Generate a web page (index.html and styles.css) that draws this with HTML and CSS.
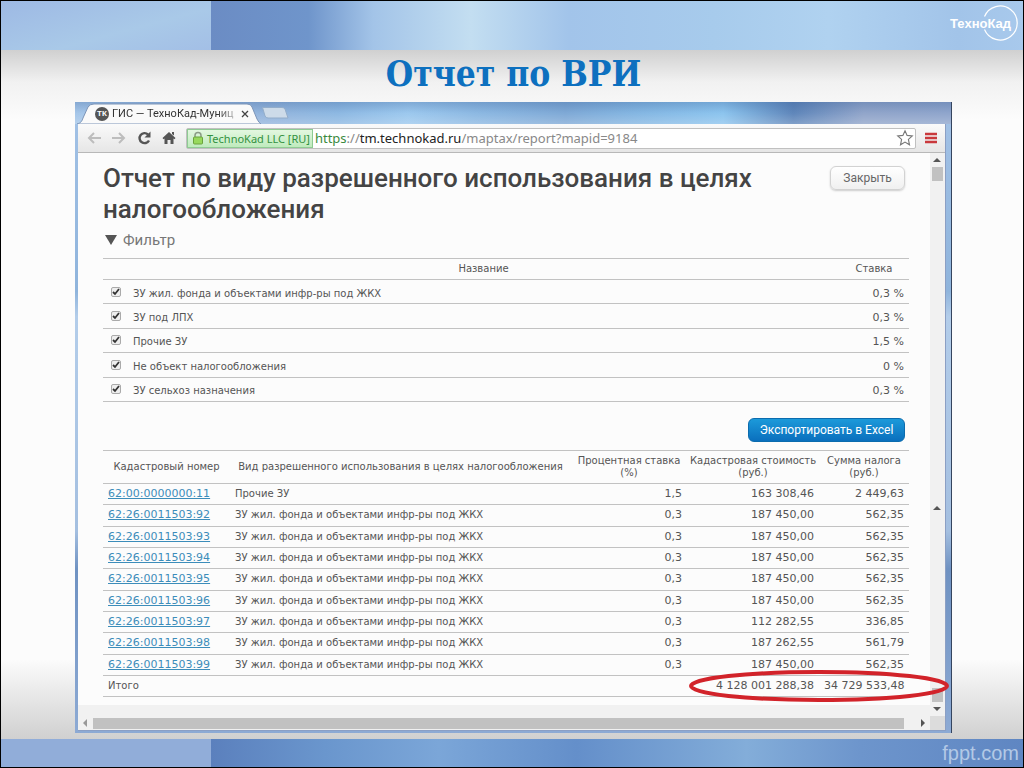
FILE: index.html
```html
<!DOCTYPE html>
<html lang="ru">
<head>
<meta charset="utf-8">
<title>Отчет по ВРИ</title>
<link rel="stylesheet" href="styles.css">
</head>
<body>
<div class="slide">
  <header class="band band-top">
    <div class="band-light"></div>
    <div class="band-sky"></div>
    <div class="brand">
      <svg class="brand-ring" viewBox="0 0 36 36" aria-hidden="true"><path d="M2.5 11.5A17 17 0 1 1 2.5 24.500" fill="none" stroke="#fff" stroke-width="1.200"/></svg>
      <span class="brand-name">ТехноКад</span>
    </div>
  </header>

  <main class="stage">
    <h1 class="slide-title">Отчет по ВРИ</h1>
    <section class="window">
      <div class="tabs">
        <div class="tab">
          <svg class="tab-shape" viewBox="0 0 184 22" preserveAspectRatio="none" aria-hidden="true"><path d="M0 22C4 21 5 19 6 16L11 5Q13 2 17 2H170Q174 2 175 5L180 17Q182 21 184 22Z" fill="#fafafa" stroke="#7d95b8"/></svg>
          <span class="tab-icon">ТК</span>
          <span class="tab-label">ГИС — ТехноКад-Муниц</span>
          <button class="tab-close" aria-label="Закрыть вкладку"><svg viewBox="0 0 8 8"><path d="M1 1L7 7M7 1L1 7" stroke="#444" stroke-width="1.300"/></svg></button>
        </div>
        <button class="tab-new" aria-label="Новая вкладка"><svg viewBox="0 0 28 14"><path d="M1.500 1.500H21Q23 1.500 24 3L27 12H7Q5 12 4 10Z" fill="#cddbe9" stroke="#93adca"/></svg></button>
      </div>

      <div class="page">
        <div class="toolbar">
          <button class="tool" aria-label="Назад"><svg viewBox="0 0 16 16"><path d="M8 3L3 8L8 13M3 8H15" fill="none" stroke="#bdbdbd" stroke-width="2"/></svg></button>
          <button class="tool" aria-label="Вперед"><svg viewBox="0 0 16 16"><path d="M8 3L13 8L8 13M13 8H1" fill="none" stroke="#bdbdbd" stroke-width="2"/></svg></button>
          <button class="tool" aria-label="Обновить"><svg viewBox="0 0 16 16"><path d="M12 4.500A5 5 0 1 0 13 10.500" fill="none" stroke="#555" stroke-width="2.400"/><path d="M14.500 1.500V7.500H8.500Z" fill="#555"/></svg></button>
          <button class="tool" aria-label="Домой"><svg viewBox="0 0 16 16"><path d="M8 2L14.500 8L13.500 9.200L12.500 8.500V14H9.500V10H6.500V14H3.500V8.500L2.500 9.200L1.500 8ZM11 2H13V5.500L11 4Z" fill="#555"/></svg></button>
          <div class="address">
            <button class="cert"><svg class="lock" viewBox="0 0 12 14" aria-hidden="true"><path d="M3 7V4.500A3 3 0 0 1 9 4.500V7" fill="none" stroke="#8b9b86" stroke-width="1.500"/><rect x="1.500" y="6" width="9" height="7" rx="1" fill="#97d95c" stroke="#6aa33c"/></svg><span>TechnoKad LLC [RU]</span></button>
            <div class="url" role="textbox" aria-label="Адрес" contenteditable="true" spellcheck="false"><span class="url-scheme">https</span>://<span class="url-host">tm.technokad.ru</span>/maptax/report?mapid=9184</div>
            <button class="star" aria-label="В закладки"><svg viewBox="0 0 18 18"><path d="M9 1.800L11.100 6.400L16.300 7L12.400 10.400L13.500 15.800L9 13.100L4.500 15.800L5.600 10.400L1.700 7L6.900 6.400Z" fill="#fff" stroke="#777" stroke-width="1.100"/></svg></button>
          </div>
          <button class="menu" aria-label="Меню"><svg viewBox="0 0 12 12"><path d="M0 2H12M0 6H12M0 10H12" stroke="#c9393c" stroke-width="2.600"/></svg></button>
        </div>

        <div class="viewport">
          <div class="report">
            <div class="report-head">
              <h2 class="report-title">Отчет по виду разрешенного использования в целях налогообложения</h2>
              <button class="btn btn-plain">Закрыть</button>
            </div>
            <button class="filter-toggle"><svg viewBox="0 0 12 10" aria-hidden="true"><path d="M0 0H12L6 10Z" fill="#555"/></svg><span>Фильтр</span></button>

            <table class="grid rates">
              <thead><tr><th class="c-check"></th><th>Название</th><th class="c-rate">Ставка</th></tr></thead>
              <tbody>
                <tr><td><input type="checkbox" id="f1" checked></td><td><label for="f1">ЗУ жил. фонда и объектами инфр-ры под ЖКХ</label></td><td class="num">0,3 %</td></tr>
                <tr><td><input type="checkbox" id="f2" checked></td><td><label for="f2">ЗУ под ЛПХ</label></td><td class="num">0,3 %</td></tr>
                <tr><td><input type="checkbox" id="f3" checked></td><td><label for="f3">Прочие ЗУ</label></td><td class="num">1,5 %</td></tr>
                <tr><td><input type="checkbox" id="f4" checked></td><td><label for="f4">Не объект налогообложения</label></td><td class="num">0 %</td></tr>
                <tr><td><input type="checkbox" id="f5" checked></td><td><label for="f5">ЗУ сельхоз назначения</label></td><td class="num">0,3 %</td></tr>
              </tbody>
            </table>

            <div class="actions"><button class="btn btn-blue">Экспортировать в Excel</button></div>

            <div class="totals-wrap">
              <table class="grid parcels">
                <colgroup><col class="w-num"><col class="w-kind"><col class="w-rate"><col class="w-cost"><col class="w-tax"></colgroup>
                <thead><tr><th>Кадастровый номер</th><th>Вид разрешенного использования в целях налогообложения</th><th>Процентная ставка<br>(%)</th><th>Кадастровая стоимость<br>(руб.)</th><th>Сумма налога<br>(руб.)</th></tr></thead>
                <tbody>
                  <tr><td><a href="#">62:00:0000000:11</a></td><td>Прочие ЗУ</td><td class="num">1,5</td><td class="num">163 308,46</td><td class="num">2 449,63</td></tr>
                  <tr><td><a href="#">62:26:0011503:92</a></td><td>ЗУ жил. фонда и объектами инфр-ры под ЖКХ</td><td class="num">0,3</td><td class="num">187 450,00</td><td class="num">562,35</td></tr>
                  <tr><td><a href="#">62:26:0011503:93</a></td><td>ЗУ жил. фонда и объектами инфр-ры под ЖКХ</td><td class="num">0,3</td><td class="num">187 450,00</td><td class="num">562,35</td></tr>
                  <tr><td><a href="#">62:26:0011503:94</a></td><td>ЗУ жил. фонда и объектами инфр-ры под ЖКХ</td><td class="num">0,3</td><td class="num">187 450,00</td><td class="num">562,35</td></tr>
                  <tr><td><a href="#">62:26:0011503:95</a></td><td>ЗУ жил. фонда и объектами инфр-ры под ЖКХ</td><td class="num">0,3</td><td class="num">187 450,00</td><td class="num">562,35</td></tr>
                  <tr><td><a href="#">62:26:0011503:96</a></td><td>ЗУ жил. фонда и объектами инфр-ры под ЖКХ</td><td class="num">0,3</td><td class="num">187 450,00</td><td class="num">562,35</td></tr>
                  <tr><td><a href="#">62:26:0011503:97</a></td><td>ЗУ жил. фонда и объектами инфр-ры под ЖКХ</td><td class="num">0,3</td><td class="num">112 282,55</td><td class="num">336,85</td></tr>
                  <tr><td><a href="#">62:26:0011503:98</a></td><td>ЗУ жил. фонда и объектами инфр-ры под ЖКХ</td><td class="num">0,3</td><td class="num">187 262,55</td><td class="num">561,79</td></tr>
                  <tr><td><a href="#">62:26:0011503:99</a></td><td>ЗУ жил. фонда и объектами инфр-ры под ЖКХ</td><td class="num">0,3</td><td class="num">187 450,00</td><td class="num">562,35</td></tr>
                </tbody>
                <tfoot><tr><td colspan="3">Итого</td><td class="num">4 128 001 288,38</td><td class="num">34 729 533,48</td></tr></tfoot>
              </table>
              <svg class="marker" viewBox="0 0 260 32" aria-hidden="true"><ellipse cx="130" cy="16" rx="128" ry="14" fill="none" stroke="#d2232a" stroke-width="4"/></svg>
            </div>
          </div>
          <div class="vscroll" aria-hidden="true">
            <div class="vscroll-outer"><i class="arrow up"></i><i class="thumb"></i></div>
            <div class="vscroll-inner"><i class="arrow up"></i><i class="thumb thumb-low"></i><i class="arrow down"></i></div>
          </div>
        </div>
        <div class="hscroll" aria-hidden="true"><i class="arrow left"></i><i class="hthumb"></i><i class="arrow right"></i><i class="corner"></i></div>
      </div>
    </section>
  </main>

  <footer class="band band-bottom">
    <div class="band-light"></div>
    <div class="band-sky"></div>
    <span class="credit">fppt.com</span>
  </footer>
</div>
</body>
</html>
```
FILE: styles.css
```css
* { box-sizing: border-box; }
body { margin: 0; font-family: "DejaVu Sans", sans-serif; font-size: 10px; color: #555; }
button { margin: 0; padding: 0; border: 0; background: none; font: inherit; color: inherit; cursor: pointer; }
svg { display: block; }

.slide { display: flex; flex-direction: column; min-height: 100vh; border: 1px solid #000; background: #fcfcfc; }

/* Decorative bands */
.band { display: flex; position: relative; }
.band-light { flex: 0 0 210px; }
.band-sky { flex: 1; }
.band-top { height: 49px; }
.band-top .band-light { background: linear-gradient(165deg, #9db9e4, #a9c9e8 60%, #a3bfe6); }
.band-top .band-sky { background: linear-gradient(90deg, #6b8cc4 0, #6f95cb 12%, #a3c4e8 20%, #c3def1 32%, #a2c4ea 44%, #a7cbec 62%, #b0d2f0 76%, #a2c4e9 92%, #a8c9ec); }
.band-bottom { height: 28px; }
.band-bottom .band-light { background: #91add9; }
.band-bottom .band-sky { background: linear-gradient(90deg, #5b80bd 0, #6a96cd 14%, #7ba6d8 28%, #648fca 45%, #83add9 66%, #6d95cc 80%, #5f86c2); }
.brand { position: absolute; top: 4px; right: 5px; display: flex; align-items: center; justify-content: flex-end; width: 72px; height: 36px; }
.brand-ring { position: absolute; right: 0; width: 36px; height: 36px; }
.brand-name { padding-right: 7px; color: #fff; font: bold 13px "Liberation Sans", sans-serif; }
.credit { position: absolute; right: 4px; bottom: 2px; color: #b3c9e6; font: 20px/24px "Liberation Sans", sans-serif; }

.stage { flex: 1; display: flex; flex-direction: column; padding: 0 71px 6px 74px; background: linear-gradient(180deg, #d0d0d0 0, #f1f1f1 32px, #fcfcfc 70px, #fcfcfc calc(100% - 80px), #d0d0d0 100%); }
.slide-title { margin: 0; height: 52px; text-align: center; color: #0d70bf; font: bold 35px/48px "DejaVu Serif Condensed", "DejaVu Serif", serif; }

/* Browser window */
.window { flex: 1; display: flex; flex-direction: column; padding: 0 5px 2px 3px; border-right: 1px solid #35455f; background: linear-gradient(180deg, #a3c2e6 0, #8fb4dc 30%, #b3cdea 34%, #a4bfe0 68%, #6f92c2 74%, #8daad4 100%); }
.tabs { display: flex; height: 22px; margin: 0 -5px 0 -3px; background: linear-gradient(rgba(40, 80, 140, .25), transparent 50%, rgba(255, 255, 255, .2)), linear-gradient(90deg, #a5c6e9 0, #93b4dc 22%, #8db8e2 30%, #9cc8ee 38%, #8cb8e2 46%, #7fa9d6 56%, #84b6e2 64%, #8cc4ee 74%, #5f86ba 82%, #91a5ca 90%, #8fa5cc); }
.tab { position: relative; display: flex; align-items: center; width: 184px; padding: 2px 12px 0 18px; margin-left: 2px; }
.tab-shape { position: absolute; inset: 0; width: 100%; height: 22px; }
.tab-icon, .tab-label, .tab-close { position: relative; }
.tab-icon { width: 14px; height: 14px; border-radius: 50%; background: #555; color: #fff; font: bold 8px/14px "Liberation Sans", sans-serif; text-align: center; }
.tab-label { flex: 1; margin-left: 3px; white-space: nowrap; color: #333; font: 11px/16px "Roboto", sans-serif; -webkit-mask-image: linear-gradient(90deg, #000 85%, rgba(0, 0, 0, .3)); mask-image: linear-gradient(90deg, #000 85%, rgba(0, 0, 0, .3)); }
.tab-close { margin-left: 6px; }
.tab-close svg { width: 8px; height: 8px; }
.tab-new { display: flex; align-items: center; }
.tab-new svg { width: 28px; height: 14px; }

.page { flex: 1; display: flex; flex-direction: column; border: solid #8b9fc4; border-width: 0 1px 1px 0; background: #fcfcfc; }
.toolbar { display: flex; align-items: center; gap: 9px; height: 29px; padding: 0 8px; border-bottom: 1px solid #b8b8b8; background: linear-gradient(#fafafa, #e6e6e6); }
.tool svg { width: 16px; height: 16px; }
.address { flex: 1; display: flex; align-items: center; height: 21px; border: 1px solid #c0c0c0; border-radius: 2px; background: #fff; }
.cert { display: flex; align-items: center; gap: 3px; height: 19px; padding: 0 2px 0 4px; border: 1px solid #8fcb93; background: linear-gradient(#e3f7e0, #bfebbd); color: #349141; font: 11px "Noto Sans", sans-serif; white-space: nowrap; }
.lock { width: 12px; height: 14px; }
.url { flex: 1; margin-left: 2px; white-space: nowrap; color: #888; font: 13px/19px "Noto Sans", sans-serif; outline: 0; }
.url-scheme { color: #3a8a3e; }
.url-host { color: #222; }
.star svg { width: 18px; height: 18px; margin-right: 1px; }
.menu svg { width: 12px; height: 12px; }

.viewport { flex: 1; display: flex; }
.report { flex: 1; min-width: 0; padding: 10px 21px 8px 25px; }
.report-head { display: flex; justify-content: space-between; align-items: flex-start; }
.report-title { margin: 0; color: #444; font: 500 26px/31px "Roboto", sans-serif; }
.btn { flex: none; border-radius: 6px; font: 12px/22px "Roboto", sans-serif; }
.btn-plain { margin: 3px 4px 0 0; width: 75px; border: 1px solid #d2d2d2; background: linear-gradient(#fff, #f0f0f0); box-shadow: 0 1px 2px #ccc; color: #666; }
.filter-toggle { display: flex; align-items: center; gap: 6px; height: 22px; margin: 4px 0 7px 2px; color: #777; font: 15px "Roboto", sans-serif; }
.filter-toggle svg { width: 12px; height: 10px; }

.grid { width: 100%; border-collapse: collapse; table-layout: fixed; }
.grid tr { border-bottom: 1px solid #c2c2c2; }
.grid thead tr { border-top: 1px solid #c2c2c2; }
.grid th { font-weight: normal; padding: 0; line-height: 12px; }
.grid td { padding: 0 5px; line-height: 14px; white-space: nowrap; }
.grid .num, .grid a { font-size: 11px; }
.grid .num { text-align: right; }
.rates { height: 144px; }
.rates th { height: 21px; }
.rates td { height: 24px; padding-top: 4px; }
.rates .c-check { width: 25px; }
.rates .c-rate { width: 70px; }
.rates input { appearance: none; display: block; width: 10px; height: 10px; margin: 0 0 4px 3px; border: 1px solid #aaa; border-radius: 2px; background: #eee url("data:image/svg+xml,%3Csvg xmlns='http://www.w3.org/2000/svg' viewBox='0 0 8 8'%3E%3Cpath d='M1 4L3 6L7 1' fill='none' stroke='%23333' stroke-width='1.800'/%3E%3C/svg%3E"); }
.actions { display: flex; justify-content: flex-end; padding: 16px 4px 8px; }
.btn-blue { width: 157px; border: 1px solid #0b6cae; background: linear-gradient(#1c9ada, #0a6fbd); color: #fff; }

.totals-wrap { position: relative; }
.parcels { height: 247px; }
.parcels th { height: 33px; }
.parcels td { height: 21px; }
.parcels a { color: #3c8dba; }
.w-num { width: 127px; }
.w-rate { width: 116px; }
.w-cost { width: 132px; }
.w-tax { width: 90px; }
.marker { position: absolute; right: -40px; bottom: -5px; width: 260px; height: 32px; z-index: 2; pointer-events: none; }

/* Scroll bars */
.vscroll { position: relative; z-index: 1; display: flex; flex-direction: column; width: 15px; margin-bottom: -11px; background: #f1f1f1; }
.vscroll-outer { flex: 1; }
.vscroll-inner { flex: 0 0 215px; display: flex; flex-direction: column; }
.arrow { display: block; flex: none; width: 15px; height: 14px; background: #555; }
.up { clip-path: polygon(7px 5px, 11px 9px, 3px 9px); }
.down { clip-path: polygon(3px 5px, 11px 5px, 7px 9px); }
.left { clip-path: polygon(9px 3px, 9px 11px, 5px 7px); background: #999; }
.right { clip-path: polygon(6px 3px, 6px 11px, 10px 7px); }
.thumb { display: block; width: 11px; height: 14px; margin-left: 2px; background: #c1c1c1; }
.thumb-low { margin-top: auto; }
.hscroll { display: flex; height: 25px; padding-top: 11px; background: #f1f1f1; }
.hthumb { flex: 1; height: 11px; margin: 2px 11px 0 0; background: #c1c1c1; }
.corner { width: 15px; background: #dcdcdc; }
```
